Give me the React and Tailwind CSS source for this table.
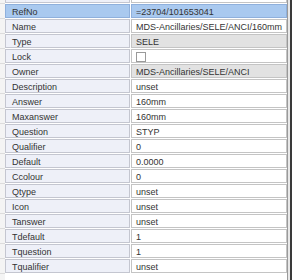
import React from 'react';

const rows = [
  { label: 'RefNo', value: '=23704/101653041', selected: true },
  { label: 'Name', value: 'MDS-Ancillaries/SELE/ANCI/160mm' },
  { label: 'Type', value: 'SELE', readonly: true },
  { label: 'Lock', value: null, checkbox: true },
  { label: 'Owner', value: 'MDS-Ancillaries/SELE/ANCI', readonly: true },
  { label: 'Description', value: 'unset' },
  { label: 'Answer', value: '160mm' },
  { label: 'Maxanswer', value: '160mm' },
  { label: 'Question', value: 'STYP' },
  { label: 'Qualifier', value: '0' },
  { label: 'Default', value: '0.0000' },
  { label: 'Ccolour', value: '0' },
  { label: 'Qtype', value: 'unset' },
  { label: 'Icon', value: 'unset' },
  { label: 'Tanswer', value: 'unset' },
  { label: 'Tdefault', value: '1' },
  { label: 'Tquestion', value: '1' },
  { label: 'Tqualifier', value: 'unset' },
];

const App = () => {
  return (
    <div
      className="w-[295px] h-[280px] bg-white overflow-hidden flex"
      style={{ fontFamily: '"Liberation Sans", Arial, sans-serif' }}
    >
      <div className="w-[287px] flex">
        {/* left gutter */}
        <div className="w-[5px] flex flex-col bg-[#f4f4f4]">
          <div className="h-[4px] border-b border-[#dcdcdc]" />
          {rows.map((r) => (
            <div key={r.label} className="h-[15px] border-b border-[#dcdcdc]" />
          ))}
        </div>

        <div className="flex-1 flex flex-col gap-px">
          {/* partial row above */}
          <div className="h-[3px] flex gap-px">
            <div className="w-[125px] bg-[#eef0f8] border-b border-x border-[#c4c6d0]" />
            <div className="flex-1 bg-white border-b border-x border-[#c4c4c4]" />
          </div>
          {rows.map((r) => (
            <div
              key={r.label}
              className="h-[14px] flex gap-px text-[9px] leading-[10px] text-[#333] whitespace-nowrap"
            >
              <div
                className={`w-[125px] pl-[6px] pt-px border flex items-center ${
                  r.selected ? 'bg-[#a9c9ef] border-[#8fb0dc]' : 'bg-[#eef0f8] border-[#c4c6d0]'
                }`}
              >
                {r.label}
              </div>
              <div
                className={`flex-1 pl-[4px] pt-px border flex items-center overflow-hidden ${
                  r.selected
                    ? 'bg-[#a9c9ef] border-[#8fb0dc]'
                    : r.readonly
                    ? 'bg-[#e2e2e2] border-[#c4c4c4]'
                    : 'bg-white border-[#c4c4c4]'
                }`}
              >
                {r.checkbox ? (
                  <div className="w-[10px] h-[10px] border border-[#9a9a9a] bg-white" />
                ) : (
                  r.value
                )}
              </div>
            </div>
          ))}
        </div>
      </div>
      {/* frame edge */}
      <div className="flex">
        <div className="w-px bg-[#9a9a9a]" />
        <div className="w-[2px] bg-[#e8e8e8]" />
        <div className="w-[2px] bg-[#3a3a3a]" />
      </div>
    </div>
  );
};

export default App;
